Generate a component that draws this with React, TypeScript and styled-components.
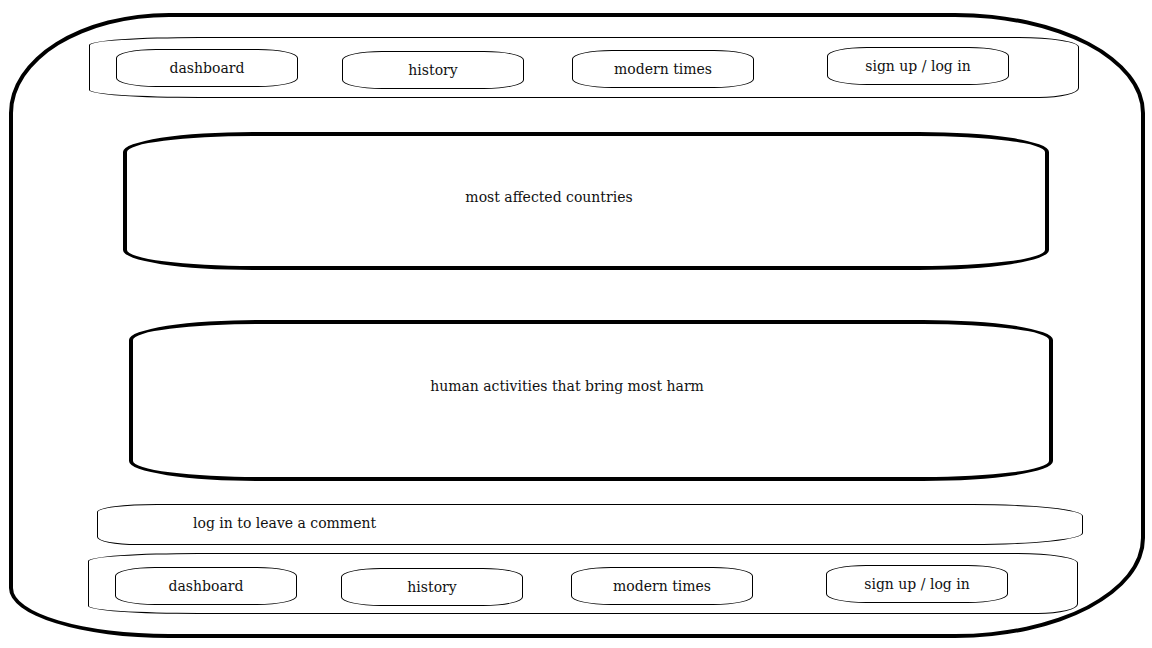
import styled, { createGlobalStyle } from "styled-components";

const GlobalStyle = createGlobalStyle`
  html, body {
    margin: 0;
    padding: 0;
    background: #ffffff;
  }
  body {
    font-family: "DejaVu Serif", "Liberation Serif", serif;
    color: #111111;
  }
`;

const Page = styled.div`
  width: 1152px;
  height: 648px;
  padding: 13px 0 0 9px;
  box-sizing: border-box;
`;

const Frame = styled.div`
  width: 1136px;
  height: 625px;
  box-sizing: border-box;
  border: 4px solid #000;
  border-radius: 160px 190px 190px 160px / 100px 100px 100px 50px;
  display: flex;
  flex-direction: column;
  align-items: flex-start;
`;

const NavBar = styled.nav<{ $top: number; $left: number }>`
  margin-top: ${(p) => p.$top}px;
  margin-left: ${(p) => p.$left}px;
  width: 990px;
  height: 61px;
  box-sizing: border-box;
  border: 1px solid #000;
  border-radius: 110px 60px 40px 110px / 8px 10px 10px 8px;
  display: flex;
  align-items: flex-start;
  padding-left: 25px;
`;

const NavButton = styled.div<{ $gap: number; $dy: number }>`
  margin-left: ${(p) => p.$gap}px;
  margin-top: ${(p) => p.$dy}px;
  width: 182px;
  height: 38px;
  box-sizing: border-box;
  border: 1px solid #000;
  border-radius: 40px / 9px;
  display: flex;
  align-items: center;
  justify-content: center;
  font-size: 14px;
`;

const Panel = styled.section<{ $top: number; $left: number; $w: number; $h: number; $shift: number }>`
  margin-top: ${(p) => p.$top}px;
  margin-left: ${(p) => p.$left}px;
  width: ${(p) => p.$w}px;
  height: ${(p) => p.$h}px;
  box-sizing: border-box;
  border: 4px solid #000;
  border-radius: 130px / 20px;
  display: flex;
  justify-content: center;
  padding-right: ${(p) => p.$shift}px;
`;

const PanelTitle = styled.span<{ $dy: number }>`
  margin-top: ${(p) => p.$dy}px;
  font-size: 14px;
`;

const CommentBar = styled.div`
  margin-top: 23px;
  margin-left: 84px;
  width: 986px;
  height: 41px;
  box-sizing: border-box;
  border: 1px solid #000;
  border-radius: 60px 110px 110px 40px / 8px 12px 12px 8px;
  display: flex;
  align-items: center;
  padding-left: 95px;
  padding-bottom: 4px;
  font-size: 14px;
`;

const navItems = ["dashboard", "history", "modern times", "sign up / log in"];
const navGaps = [1, 44, 48, 73];

const App = () => {
  const topDy = [11, 13, 12, 9];
  const bottomDy = [13, 14, 13, 11];

  return (
    <Page>
      <GlobalStyle />
      <Frame>
        <NavBar $top={20} $left={76}>
          {navItems.map((label, i) => (
            <NavButton key={label} $gap={navGaps[i]} $dy={topDy[i]}>
              {label}
            </NavButton>
          ))}
        </NavBar>

        <Panel $top={34} $left={110} $w={926} $h={138} $shift={74}>
          <PanelTitle $dy={53}>most affected countries</PanelTitle>
        </Panel>

        <Panel $top={50} $left={116} $w={924} $h={161} $shift={48}>
          <PanelTitle $dy={54}>human activities that bring most harm</PanelTitle>
        </Panel>

        <CommentBar>log in to leave a comment</CommentBar>

        <NavBar $top={8} $left={75}>
          {navItems.map((label, i) => (
            <NavButton key={label} $gap={navGaps[i]} $dy={bottomDy[i]}>
              {label}
            </NavButton>
          ))}
        </NavBar>
      </Frame>
    </Page>
  );
};

export default App;
